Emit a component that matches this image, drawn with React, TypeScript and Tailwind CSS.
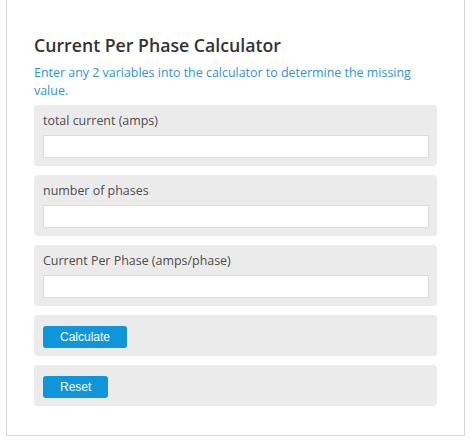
import React from "react";

const fields = [
  "total current (amps)",
  "number of phases",
  "Current Per Phase (amps/phase)",
];

const Panel = ({ children, className = "" }: { children: React.ReactNode; className?: string }) => (
  <div className={`rounded-[4px] bg-[#ebebeb] pl-[9px] pr-[8px] ${className}`}>{children}</div>
);

const Button = ({ label }: { label: string }) => (
  <button
    type="button"
    className="h-[22px] rounded-[3px] bg-[#0e95da] px-[17px] font-['Liberation_Sans',Arial,sans-serif] text-[12px] leading-[22px] text-white"
  >
    {label}
  </button>
);

export default function App() {
  return (
    <div className="min-h-[441px] bg-white px-[6px] font-['Open_Sans',sans-serif]">
      <div className="w-[459px] border-x border-b border-[#d9d9d9] px-[27px] pt-[33px] pb-[29px]">
        <h1 className="text-[17.7px] font-semibold leading-[24px] text-[#333]">
          Current Per Phase Calculator
        </h1>
        <p className="mt-[7px] text-[12.45px] leading-[17.5px] text-[#3193d5]">
          Enter any 2 variables into the calculator to determine the missing value.
        </p>
        <div className="mt-[6px] flex flex-col gap-[9px]">
          {fields.map((f) => (
            <Panel key={f} className="pt-[7px] pb-[8px]">
              <label className="block text-[12.45px] leading-[18px] text-[#4d4d4d]">{f}</label>
              <input
                type="text"
                className="mt-[5px] block h-[23px] w-full border border-[#dcdcdc] bg-white outline-none"
              />
            </Panel>
          ))}
          <Panel className="pt-[8px] pb-[8px]">
            <Button label="Calculate" />
          </Panel>
          <Panel className="pt-[8px] pb-[8px]">
            <Button label="Reset" />
          </Panel>
        </div>
      </div>
    </div>
  );
}
